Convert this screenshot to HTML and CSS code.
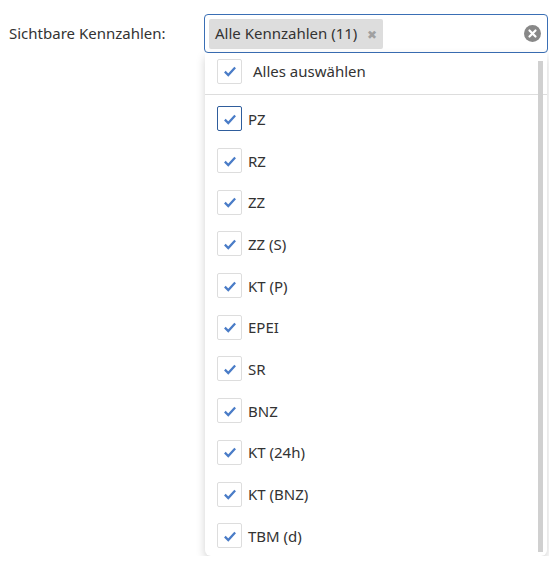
FILE: index.html
```html
<!DOCTYPE html>
<html lang="de">
<head>
  <meta charset="UTF-8">
  <title>Kennzahlen</title>
  <link rel="stylesheet" href="styles.css">
</head>
<body>
  <div class="feld">
    <label class="beschriftung">Sichtbare Kennzahlen:</label>

    <div class="auswahl">
      <div class="eingabe">
        <span class="tag">Alle Kennzahlen (11) <span class="tag-x">&#x2716;</span></span>
        <span class="leeren">
          <svg width="17" height="17" viewBox="0 0 17 17">
            <circle cx="8.5" cy="8.5" r="8.5" fill="#888"/>
            <path d="M5.5 5.5 L11.5 11.5 M11.5 5.5 L5.5 11.5" stroke="#fff" stroke-width="2.2" stroke-linecap="round"/>
          </svg>
        </span>
      </div>

      <div class="liste">
        <div class="inhalt">
          <div class="zeile alle">
            <span class="box"><svg viewBox="0 0 14 14"><path d="M2.5 7.5 L5.5 10.5 L11.5 4" /></svg></span>
            <span>Alles auswählen</span>
          </div>
          <div class="trenner"></div>

          <div class="zeile"><span class="box aktiv"><svg viewBox="0 0 14 14"><path d="M2.5 7.5 L5.5 10.5 L11.5 4" /></svg></span><span>PZ</span></div>
          <div class="zeile"><span class="box"><svg viewBox="0 0 14 14"><path d="M2.5 7.5 L5.5 10.5 L11.5 4" /></svg></span><span>RZ</span></div>
          <div class="zeile"><span class="box"><svg viewBox="0 0 14 14"><path d="M2.5 7.5 L5.5 10.5 L11.5 4" /></svg></span><span>ZZ</span></div>
          <div class="zeile"><span class="box"><svg viewBox="0 0 14 14"><path d="M2.5 7.5 L5.5 10.5 L11.5 4" /></svg></span><span>ZZ (S)</span></div>
          <div class="zeile"><span class="box"><svg viewBox="0 0 14 14"><path d="M2.5 7.5 L5.5 10.5 L11.5 4" /></svg></span><span>KT (P)</span></div>
          <div class="zeile"><span class="box"><svg viewBox="0 0 14 14"><path d="M2.5 7.5 L5.5 10.5 L11.5 4" /></svg></span><span>EPEI</span></div>
          <div class="zeile"><span class="box"><svg viewBox="0 0 14 14"><path d="M2.5 7.5 L5.5 10.5 L11.5 4" /></svg></span><span>SR</span></div>
          <div class="zeile"><span class="box"><svg viewBox="0 0 14 14"><path d="M2.5 7.5 L5.5 10.5 L11.5 4" /></svg></span><span>BNZ</span></div>
          <div class="zeile"><span class="box"><svg viewBox="0 0 14 14"><path d="M2.5 7.5 L5.5 10.5 L11.5 4" /></svg></span><span>KT (24h)</span></div>
          <div class="zeile"><span class="box"><svg viewBox="0 0 14 14"><path d="M2.5 7.5 L5.5 10.5 L11.5 4" /></svg></span><span>KT (BNZ)</span></div>
          <div class="zeile"><span class="box"><svg viewBox="0 0 14 14"><path d="M2.5 7.5 L5.5 10.5 L11.5 4" /></svg></span><span>TBM (d)</span></div>
        </div>
        <div class="scrollbar"></div>
      </div>
    </div>
  </div>
</body>
</html>
```

FILE: styles.css
```css
body {
  margin: 0;
  font-family: 'Noto Sans', 'Open Sans', sans-serif;
  font-size: 15px;
  color: #333;
  background-color: #fff;
}

.feld {
  display: flex;
  align-items: flex-start;
  padding: 14px 1px 0 9px;
}

.beschriftung {
  width: 195px;
  line-height: 38px;
}

.auswahl {
  flex: 1;
}

.eingabe {
  display: flex;
  align-items: center;
  height: 37px;
  padding: 0 4px;
  border: 1px solid #3a6fb5;
  border-radius: 4px;
}

.tag {
  background-color: #ddd;
  padding: 3px 6px;
  line-height: 22px;
  border-radius: 2px;
}

.tag-x {
  color: #a0a0a0;
  font-size: 12px;
  margin-left: 6px;
}

.leeren {
  margin-left: auto;
  margin-right: 2px;
  display: flex;
}

.liste {
  position: relative;
  margin: 0 1px;
  background-color: #fff;
  border-radius: 0 0 6px 6px;
  box-shadow: 0 4px 10px rgba(0, 0, 0, 0.18);
  height: 503px;
}

.inhalt {
  padding: 0 12px;
}

.zeile {
  display: flex;
  align-items: center;
  height: 41.7px;
  gap: 6px;
}

.zeile.alle {
  height: 24px;
  padding: 6px 0 11px 0;
  gap: 11px;
}

.trenner {
  height: 1px;
  background-color: #ddd;
  margin: 0 -12px 3px -12px;
}

.box {
  width: 23px;
  height: 23px;
  border: 1px solid #ddd;
  border-radius: 2px;
  display: flex;
  align-items: center;
  justify-content: center;
}

.box.aktiv {
  border-color: #2f5d9c;
}

.box svg {
  width: 16px;
  height: 16px;
  fill: none;
  stroke: #4a7cc7;
  stroke-width: 2;
}

.scrollbar {
  position: absolute;
  top: 8px;
  right: 4px;
  width: 5px;
  height: 491px;
  background-color: #d0d0d0;
}
```
